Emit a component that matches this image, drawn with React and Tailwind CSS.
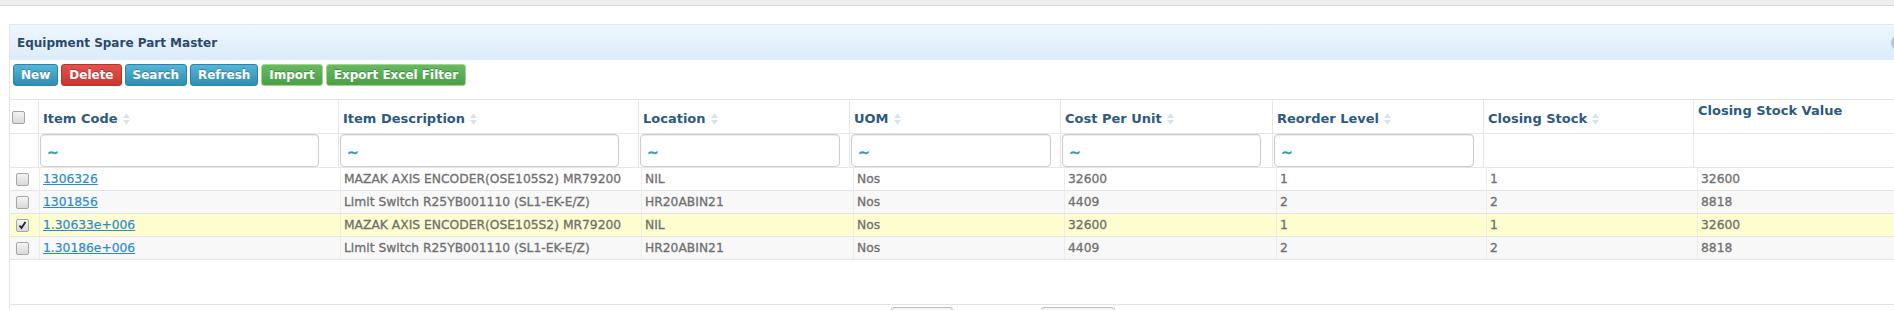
import React from "react";

const FONT = { fontFamily: '"DejaVu Sans", Verdana, sans-serif' };

function SortIcon() {
  return (
    <svg width="7" height="12" viewBox="0 0 7 12" className="ml-[5px] shrink-0">
      <path d="M0 5 L3.5 0.5 L7 5 Z" fill="#d5e1eb" />
      <path d="M0 7 L3.5 11.5 L7 7 Z" fill="#d5e1eb" />
    </svg>
  );
}

function CheckBox({ checked }) {
  return (
    <span className="relative inline-block w-[13px] h-[13px] rounded-[2px] border border-[#a6a6a6] bg-gradient-to-b from-[#f4f4f4] to-[#d9d9d9]">
      {checked && (
        <svg viewBox="0 0 13 13" className="absolute left-[-1px] top-[-1px] w-[13px] h-[13px]">
          <path d="M3.5 6.5 L5.5 9 L9.5 3" stroke="#222" strokeWidth="1.8" fill="none" />
        </svg>
      )}
    </span>
  );
}

function Btn({ children, color }) {
  const cls =
    color === "blue"
      ? "bg-gradient-to-b from-[#55b5d6] to-[#2f8db3] border-[#2b85a8]"
      : color === "red"
      ? "bg-gradient-to-b from-[#e2534d] to-[#c93531] border-[#bd2f2b]"
      : "bg-gradient-to-b from-[#66bb62] to-[#4b9f47] border-[#a9d486]";
  return (
    <span
      className={`h-[22px] px-[7px] flex items-center rounded-[3px] border text-white font-bold text-[12px] leading-none [text-shadow:0_-1px_0_rgba(0,0,0,0.25)] ${cls}`}
    >
      {children}
    </span>
  );
}

const headCols = "grid grid-cols-[28px_300px_300px_211px_211px_212px_211px_210px_260px]";
const bodyCols = "grid grid-cols-[29px_301px_301px_212px_211px_212px_210px_211px_260px]";

const headers = [
  { t: "Item Code", sort: true, input: 279 },
  { t: "Item Description", sort: true, input: 279 },
  { t: "Location", sort: true, input: 200 },
  { t: "UOM", sort: true, input: 200 },
  { t: "Cost Per Unit", sort: true, input: 199 },
  { t: "Reorder Level", sort: true, input: 200 },
  { t: "Closing Stock", sort: true, input: 0 },
  { t: "Closing Stock Value", sort: false, input: 0 },
];

const rows = [
  { code: "1306326", desc: "MAZAK AXIS ENCODER(OSE105S2) MR79200", loc: "NIL", uom: "Nos", cost: "32600", re: "1", cs: "1", csv: "32600", bg: "bg-white", checked: false },
  { code: "1301856", desc: "Limit Switch R25YB001110 (SL1-EK-E/Z)", loc: "HR20ABIN21", uom: "Nos", cost: "4409", re: "2", cs: "2", csv: "8818", bg: "bg-[#f8f8f8]", checked: false },
  { code: "1.30633e+006", desc: "MAZAK AXIS ENCODER(OSE105S2) MR79200", loc: "NIL", uom: "Nos", cost: "32600", re: "1", cs: "1", csv: "32600", bg: "bg-[#fdfdd0]", checked: true },
  { code: "1.30186e+006", desc: "Limit Switch R25YB001110 (SL1-EK-E/Z)", loc: "HR20ABIN21", uom: "Nos", cost: "4409", re: "2", cs: "2", csv: "8818", bg: "bg-[#f8f8f8]", checked: false },
];

export default function App() {
  return (
    <div className="w-[1894px] h-[310px] overflow-hidden bg-white" style={FONT}>
      <div className="h-[6px] bg-[#efefef] border-b border-[#d9d9d9]" />
      <div className="mt-[18px] ml-[9px] w-[1904px] border-l border-[#e4e4e4]">
        {/* panel header */}
        <div className="h-[36px] flex items-center pl-[7px] pr-[6px] bg-gradient-to-b from-[#eef6fd] to-[#dcecfa] border-t border-[#dce8f2]">
          <span className="text-[12px] font-bold text-[#2b4a6b]">Equipment Spare Part Master</span>
          <span className="ml-auto w-[16px] h-[16px] rounded-full bg-[#b3c7d8]" />
        </div>
        {/* toolbar */}
        <div className="flex gap-[3px] pl-[3px] pt-[4px]">
          <Btn color="blue">New</Btn>
          <Btn color="red">Delete</Btn>
          <Btn color="blue">Search</Btn>
          <Btn color="blue">Refresh</Btn>
          <Btn color="green">Import</Btn>
          <Btn color="green">Export Excel Filter</Btn>
        </div>
        {/* table */}
        <div className="mt-[13px] border-t border-[#e2e2e2]">
          {/* header row */}
          <div className={`${headCols} h-[34px] border-b border-[#e6e6e6]`}>
            <div className="flex items-end pl-[2px] pb-[9px]">
              <CheckBox />
            </div>
            {headers.map((h, i) => (
              <div
                key={i}
                className={`flex pl-[4px] border-l border-[#e6e6e6] ${h.sort ? "items-end pb-[6px]" : "items-start pt-[3px]"}`}
              >
                <span className="flex items-center text-[13px] font-bold text-[#2c5a82] leading-[16px] whitespace-nowrap">
                  {h.t}
                  {h.sort && <SortIcon />}
                </span>
              </div>
            ))}
          </div>
          {/* filter row */}
          <div className={`${headCols} h-[34px] border-b border-[#e6e6e6]`}>
            <div />
            {headers.map((h, i) => (
              <div key={i} className="flex items-start pl-[1px] border-l border-[#e6e6e6]">
                {h.input > 0 && (
                  <div
                    className="h-[33px] rounded-[4px] border border-[#cccccc] bg-white shadow-[inset_0_1px_1px_rgba(0,0,0,0.08)] flex items-center pl-[6px] pt-[3px]"
                    style={{ width: h.input }}
                  >
                    <span className="text-[14px] font-bold text-[#2f9bb3] leading-none [-webkit-text-stroke:0.4px_#2f9bb3]">~</span>
                  </div>
                )}
              </div>
            ))}
          </div>
          {/* data rows */}
          {rows.map((r, i) => (
            <div key={i} className={`${bodyCols} h-[23px] border-b border-[#e4e4e4] ${r.bg}`}>
              <div className="flex items-center pl-[6px]">
                <CheckBox checked={r.checked} />
              </div>
              {[r.code, r.desc, r.loc, r.uom, r.cost, r.re, r.cs, r.csv].map((v, j) => (
                <div
                  key={j}
                  className="flex items-center pl-[3px] border-l border-[#ececec] text-[12.3px] whitespace-nowrap"
                >
                  {j === 0 ? (
                    <span className="text-[#2a8bd1] underline [-webkit-text-stroke:0.2px_#2a8bd1]">{v}</span>
                  ) : (
                    <span className="text-[#707070] [-webkit-text-stroke:0.3px_#707070]">{v}</span>
                  )}
                </div>
              ))}
            </div>
          ))}
          <div className="h-[45px] border-b border-[#e4e4e4]" />
          {/* pagination stubs */}
          <div className="flex pt-[2px]">
            <span className="ml-[881px] w-[62px] h-[20px] rounded-[3px] border border-[#bdbdbd] bg-[#f5f5f5]" />
            <span className="ml-[88px] w-[74px] h-[20px] rounded-[3px] border border-[#bdbdbd] bg-[#f5f5f5]" />
          </div>
        </div>
      </div>
    </div>
  );
}
